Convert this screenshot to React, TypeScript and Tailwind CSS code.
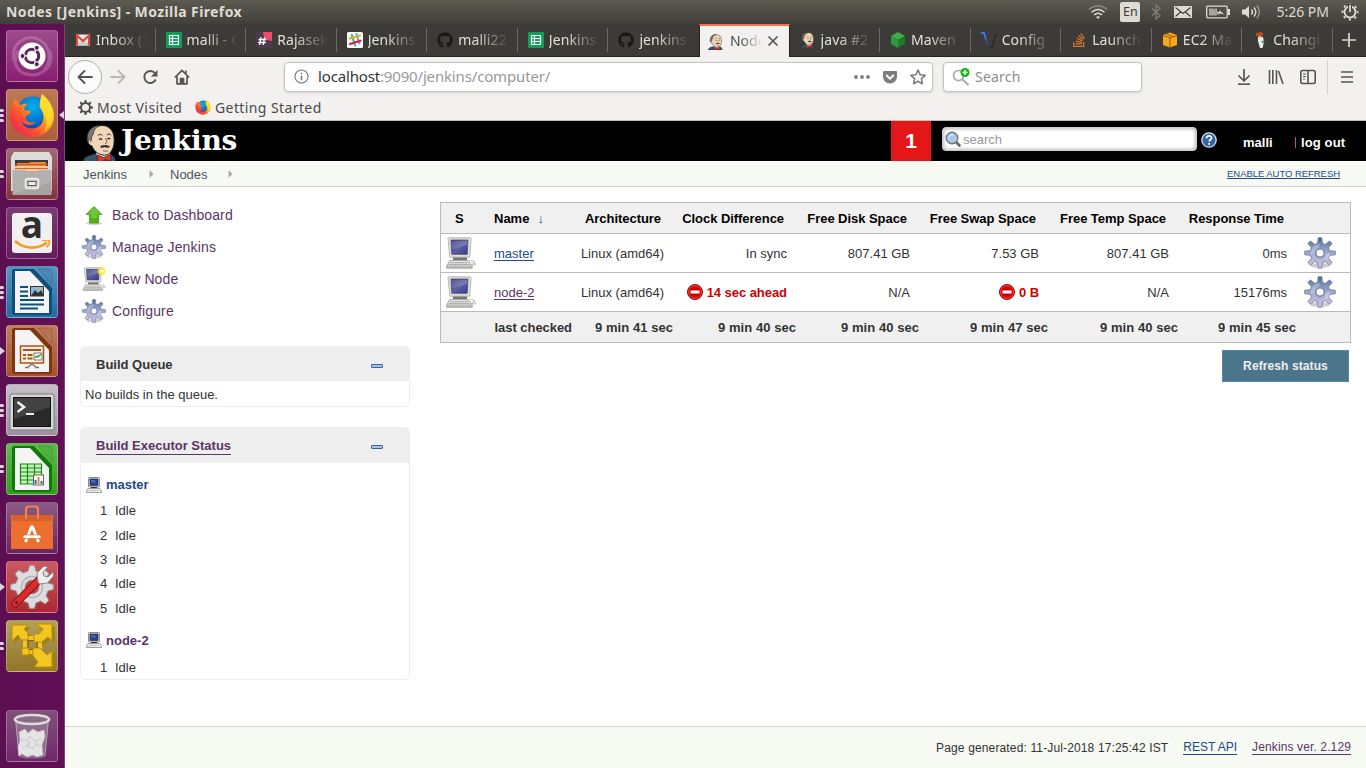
import React from 'react';
import { FaGithub, FaStackOverflow, FaGetPocket } from 'react-icons/fa';

const gearPath = (c: number, teeth: number, ro: number, ri: number, hole: number) => {
  const pts: string[] = [];
  const step = (Math.PI * 2) / teeth;
  for (let i = 0; i < teeth; i++) {
    const a = i * step - Math.PI / 2;
    const list: [number, number][] = [[-0.3, ri], [-0.15, ro], [0.15, ro], [0.3, ri]];
    for (const [k, r] of list) {
      pts.push(`${(c + r * Math.cos(a + k * step)).toFixed(2)} ${(c + r * Math.sin(a + k * step)).toFixed(2)}`);
    }
  }
  return `M${pts.join('L')}Z M${c - hole} ${c}a${hole} ${hole} 0 1 0 ${hole * 2} 0a${hole} ${hole} 0 1 0 ${-hole * 2} 0Z`;
};

const BlueGear = ({ className = '' }: { className?: string }) => (
  <svg viewBox="0 0 32 32" className={className}>
    <defs>
      <linearGradient id="bg" x1="0" y1="0" x2="0" y2="1">
        <stop offset="0" stopColor="#46689a" />
        <stop offset=".3" stopColor="#7f97bd" />
        <stop offset=".6" stopColor="#a9b2d2" />
        <stop offset="1" stopColor="#cfc3e6" />
      </linearGradient>
    </defs>
    <ellipse cx="16" cy="28.500" rx="10" ry="2.600" fill="#000" opacity=".2" />
    <path d={gearPath(16, 8, 15.4, 10, 4)} fill="url(#bg)" fillRule="evenodd" stroke="#6b7795" strokeWidth=".8" strokeLinejoin="round" />
    <path d="M7 18c-1-8 5-11 9-11-1 5-4 9-9 11z M21 17c3-1 4-1 5-1 0 4-2 7-5 8 1-2 1-4 0-7z" fill="#fff" opacity=".28" />
    <circle cx="16" cy="16" r="4.600" fill="none" stroke="#8790b4" strokeWidth="1.100" />
  </svg>
);

const Computer = ({ className = '', star = false }: { className?: string; star?: boolean }) => (
  <svg viewBox="0 0 32 32" className={className}>
    <defs>
      <linearGradient id="scr" x1="0" y1="0" x2="1" y2="1">
        <stop offset="0" stopColor="#34357c" />
        <stop offset=".5" stopColor="#5d5ea2" />
        <stop offset="1" stopColor="#3b3c86" />
      </linearGradient>
      <linearGradient id="base" x1="0" y1="0" x2="0" y2="1">
        <stop offset="0" stopColor="#efefec" />
        <stop offset="1" stopColor="#b4b4b0" />
      </linearGradient>
    </defs>
    <path d="M26 23.500c4 0 4.500 2.500 2.500 3.500s-2 1-2 1" fill="none" stroke="#b4b4b4" strokeWidth="1.100" />
    <rect x="8" y="20" width="14" height="3.500" fill="#777" />
    <path d="M3.800 .8h21.500l.8 1-1.400 18.400H4.900L3 1.800z" fill="#dedfd9" stroke="#a9aba6" strokeWidth=".8" />
    <path d="M6 3h17l-.8 14.300H6.800z" fill="url(#scr)" stroke="#2b2c5c" strokeWidth=".6" />
    <path d="M6.200 3.500h16.500l-.2 4.500C17 9 13 12 6.700 12z" fill="#fff" opacity=".17" />
    <path d="M4.500 23.500h19.500l3.300 6v1.700H1.500v-1.700z" fill="url(#base)" stroke="#959592" strokeWidth=".7" />
    <path d="M5 25.500h18.500M4 27.500h20.500" stroke="#a3a3a0" strokeWidth=".9" strokeDasharray="2 .5" />
    <ellipse cx="29" cy="27" rx="1.800" ry="1.200" fill="#eee" stroke="#999" strokeWidth=".5" />
    {star && <circle cx="26" cy="5.500" r="5.300" fill="#fbe80f" opacity=".75" />}
    {star && <circle cx="26" cy="5.500" r="2.300" fill="#fffbd0" />}
  </svg>
);

const SmallComputer = () => (
  <svg viewBox="0 0 16 16" className="h-4 w-4">
    <rect x="2.500" y=".5" width="11" height="9.500" rx=".8" fill="#d9dad5" stroke="#8a8a86" />
    <rect x="4" y="2" width="8" height="6.500" fill="#27408c" stroke="#17205c" strokeWidth=".6" />
    <path d="M5 3.500h4M5 5h5" stroke="#8fa3dc" strokeWidth=".5" />
    <rect x="5" y="10" width="6" height="1.500" fill="#333" />
    <path d="M2 11.500h12l1.500 2.500v1.500H.5V14z" fill="#ecece8" stroke="#8a8a86" strokeWidth=".8" />
    <path d="M3 13.500h10" stroke="#aaa" strokeWidth=".8" strokeDasharray="1.500 .5" />
  </svg>
);

const Butler = ({ className = '' }: { className?: string }) => (
  <svg viewBox="0 0 36 38" className={className}>
    <path d="M0 38c0-3 2-5.500 6-6.500l7-2 14 1c4 1 5.500 3 5.500 7.500z" fill="#33566b" stroke="#14222b" strokeWidth="1" />
    <path d="M13 29l4 8 11-6-3-4z" fill="#f3f3f3" />
    <path d="M5 13C6 5 12 1.500 19 1.500S30 6 31 13c.500 5 0 10-2 13-2 4-5 5.500-9 5-5-.6-9-4-11-9C5.500 21 3.500 16 5 13z" fill="#f0d6b7" stroke="#222" strokeWidth="1" />
    <path d="M4.500 18C2.500 9 8 .5 18 1.500c-5 1.500-7 4-7.500 7.500-.3 2-2 2.500-2 6l-1 4z" fill="#7b7874" stroke="#222" strokeWidth=".7" />
    <path d="M7 15.500c-3 0-2 6 1.500 6" fill="#f0d6b7" stroke="#222" strokeWidth=".9" />
    <path d="M15 11.500c1.500-1.500 3-1.500 4.500 0M24 11c1.500-1.500 3-1.200 4 .3" fill="none" stroke="#333" strokeWidth="1" />
    <path d="M16 15.500c1-.8 2.200-.8 3.200 0M24.500 15c1-.8 2-.7 2.800 0" fill="none" stroke="#222" strokeWidth="1.200" />
    <path d="M22.500 14c1.500 3 2.300 5-.5 5.600" fill="none" stroke="#7a4a30" strokeWidth=".9" />
    <path d="M17 22.500c3-2 7-2 10 0-2 2.300-4.500 1-5.500.5-1 .8-3 1.200-4.500-.5z" fill="#3a3532" />
    <path d="M20 26.500c2 1 3.500 1 5 0" fill="none" stroke="#555" strokeWidth=".9" />
    <path d="M14.500 31l6 2.500 7-3 .8 7-6.300-2-1 1.500-6.500 1z" fill="#d33833" stroke="#6d0f0d" strokeWidth=".8" />
  </svg>
);

const FirefoxLogo = ({ className = '' }: { className?: string }) => (
  <svg viewBox="0 0 46 46" className={className}>
    <defs>
      <linearGradient id="ffx" x1="1" y1="0" x2="0" y2="1">
        <stop offset="0" stopColor="#fff44f" />
        <stop offset=".35" stopColor="#ffb31c" />
        <stop offset=".65" stopColor="#ff4f2e" />
        <stop offset="1" stopColor="#d9176c" />
      </linearGradient>
      <radialGradient id="globe" cx=".5" cy=".3" r=".7">
        <stop offset="0" stopColor="#00b3ea" />
        <stop offset=".6" stopColor="#0672cf" />
        <stop offset="1" stopColor="#1d2f84" />
      </radialGradient>
    </defs>
    <circle cx="24" cy="22" r="17.500" fill="url(#globe)" />
    <path d="M6 7l5.500 6c2-1 5-1.500 7-1-3 2-3.500 4-3 6 2 1 5 0 6 1 .5 3-4 4-5 6 0 4 5 7 10 5-3 5-12 3-14-1 2 8 13 10 19 4 5-6 3-13-1-18 0-5 1-9 2.500-13C37 5 45 13 45 24 45 37 35 45 23 45S1 36 1 24C1 17 3 11 6 7z" fill="url(#ffx)" />
    <path d="M33 2c4 4 11 11 11 21-1 9-5 14-9 17 4-6 3-15-3-23-2-4 0-10 1-15z" fill="#ffe12b" opacity=".75" />
  </svg>
);

const Sheets = () => (
  <svg viewBox="0 0 16 16" className="h-4 w-4">
    <rect width="16" height="16" rx="1" fill="#0f9d58" />
    <path d="M3.500 3.500h9v9h-9zM3.500 6.500h9M3.500 9.500h9M6.500 3.500v9" fill="none" stroke="#fff" strokeWidth="1.200" />
  </svg>
);

const Gmail = () => (
  <svg viewBox="0 0 16 16" className="h-4 w-4">
    <rect x="1" y="2.500" width="14" height="11" fill="#e9e9e9" />
    <path d="M1 13.500L8 7l7 6.500z" fill="#cfcfcf" />
    <path d="M2 13.500v-10L8 9l6-5.500v10" fill="none" stroke="#dc4a3d" strokeWidth="2.200" />
  </svg>
);

const Rajase = () => (
  <svg viewBox="0 0 16 16" className="h-4 w-4">
    <rect width="16" height="16" rx="1.500" fill="#4d394b" />
    <path d="M7 0h9v9c-5 0-9-4-9-9z" fill="#ef4d63" />
    <path d="M5 5L3.600 13M8.600 5L7.200 13M2.500 7.500h8M2 10.500h8" stroke="#fff" strokeWidth="1.300" />
  </svg>
);

const Slack = () => (
  <svg viewBox="0 0 16 16" className="h-4 w-4">
    <rect width="16" height="16" rx="1.500" fill="#fff" />
    <g strokeWidth="2.200" strokeLinecap="round">
      <path d="M4.800 3l3.200 10.500" stroke="#3eb991" />
      <path d="M9.500 2l3 9.500" stroke="#4fb9c0" />
      <path d="M2.500 6.500l10.500-3" stroke="#e9a820" />
      <path d="M3 12l10.500-3.300" stroke="#e01550" />
    </g>
  </svg>
);

const GreenCube = () => (
  <svg viewBox="0 0 16 16" className="h-4 w-4">
    <path d="M8 0l7 4-7 4-7-4z" fill="#3fae49" />
    <path d="M1 4l7 4v8l-7-4z" fill="#2f9a3b" />
    <path d="M15 4L8 8v8l7-4z" fill="#1f7a2d" />
  </svg>
);

const VeeMark = () => (
  <svg viewBox="0 0 16 16" className="h-4 w-4">
    <path d="M0 1h3L5 7.500" fill="none" stroke="#3f73f0" strokeWidth="2" />
    <path d="M5 8l2.300 6" fill="none" stroke="#2a4ea8" strokeWidth="1.400" />
    <path d="M15.500 1l-4.500 14H8.500" fill="none" stroke="#2b2c2e" strokeWidth="1.800" />
  </svg>
);

const Ec2 = () => (
  <svg viewBox="0 0 16 16" className="h-4 w-4">
    <path d="M1 3l7-2.500L15 3v10l-7 2.500L1 13z" fill="#f5a81c" />
    <path d="M1 3.500l7 2.300 7-2.300M8 6v9.500M4.500 2l7 2.600" fill="none" stroke="#8a5300" strokeWidth=".9" />
  </svg>
);

const Figure = () => (
  <svg viewBox="0 0 16 16" className="h-4 w-4">
    <path d="M4 1l6-1 1.500 3-3.500 2.500-4-2z" fill="#b5501f" />
    <path d="M6 5h5l1 5-1.500 6H8L6 9z" fill="#ecebe5" />
    <path d="M6.500 7l2.500 2.500 4-1.500-2 3.500z" fill="#279a6c" />
    <circle cx="8" cy="5.500" r="1.500" fill="#f3cba2" />
  </svg>
);

const tabs = [
  { label: 'Inbox (3', icon: <Gmail /> },
  { label: 'malli - G', icon: <Sheets /> },
  { label: 'Rajasek', icon: <Rajase /> },
  { label: 'Jenkins', icon: <Slack /> },
  { label: 'malli22', icon: <FaGithub className="h-4 w-4 text-[#191919]" /> },
  { label: 'Jenkins', icon: <Sheets /> },
  { label: 'jenkins', icon: <FaGithub className="h-4 w-4 text-[#191919]" /> },
  { label: 'Node', icon: <Butler className="h-4 w-4" />, active: true },
  { label: 'java #2', icon: <Butler className="h-4 w-4" /> },
  { label: 'Maven', icon: <GreenCube /> },
  { label: 'Config', icon: <VeeMark /> },
  { label: 'Launch', icon: <FaStackOverflow className="h-4 w-4 text-[#d5782b]" /> },
  { label: 'EC2 Ma', icon: <Ec2 /> },
  { label: 'Changi', icon: <Figure /> },
];

const TopBar = () => (
  <header className="flex h-6 shrink-0 items-center justify-between bg-linear-to-b from-[#5c5a51] to-[#403f3a] pl-[6px] pr-[7px] text-[#dfdbd2]">
    <span className="-mt-[2px] whitespace-nowrap text-[14px] font-bold tracking-[0.400px]">Nodes [Jenkins] - Mozilla Firefox</span>
    <div className="flex items-center">
      <svg viewBox="0 0 20 16" className="mr-[12px] h-4 w-5" fill="none" stroke="#dfdbd2" strokeWidth="1.400">
        <path d="M.8 5.500C6 .8 14 .8 19.200 5.500" opacity=".4" />
        <path d="M3.500 8.200c4-3.400 9-3.400 13 0M6 11c2.500-2.200 5.500-2.200 8 0" />
        <path d="M8 13l2 2 2-2c-1.200-1-2.800-1-4 0z" fill="#dfdbd2" stroke="none" />
      </svg>
      <span className="mr-[11px] flex h-5 w-5 items-center justify-center rounded-[2px] bg-[#dfdbd2] text-[12.500px] text-[#3c3b37]">En</span>
      <svg viewBox="0 0 10 16" className="mr-[13px] h-4 w-[10px]" fill="none" stroke="#85827b" strokeWidth="1.200">
        <path d="M1 4.500l8 7L5 15V1l4 3.500-8 7" />
      </svg>
      <svg viewBox="0 0 18 12" className="mr-[14px] h-3 w-[18px]">
        <rect width="18" height="12" fill="#dfdbd2" />
        <path d="M1.500 1.500L9 7.500l7.500-6M1.500 10.500L6.500 6M16.500 10.500L11.500 6" fill="none" stroke="#3c3b37" strokeWidth="1.100" />
      </svg>
      <svg viewBox="0 0 24 14" className="mr-[11px] h-[14px] w-6">
        <rect x=".7" y="1.200" width="20.500" height="11.600" rx="1" fill="none" stroke="#dfdbd2" strokeWidth="1.300" />
        <rect x="22" y="4" width="2" height="6" fill="#dfdbd2" />
        <rect x="3" y="3.500" width="8" height="7" fill="#aaa69e" />
        <path d="M7 3l6 4.500V5l6.500 5-6-1.500V11z" fill="#f5f2ea" stroke="#44423d" strokeWidth=".5" />
      </svg>
      <svg viewBox="0 0 20 16" className="mr-[15px] h-4 w-5" fill="none" stroke="#dfdbd2" strokeWidth="1.400">
        <path d="M1 5.500h3l4-3.500v12l-4-3.500H1z" fill="#dfdbd2" stroke="none" />
        <path d="M10.500 5.500c1.200 1.500 1.200 3.500 0 5M13 3.500c2.200 2.700 2.200 6.300 0 9" />
        <path d="M15.800 1.500c3.200 4 3.200 9 0 13" opacity=".5" />
      </svg>
      <span className="-mt-[2px] mr-[12px] whitespace-nowrap text-[14px]">5:26 PM</span>
      <svg viewBox="0 0 18 18" className="h-[18px] w-[18px]" fill="none" stroke="#dfdbd2">
        <circle cx="9" cy="9" r="5.500" strokeWidth="1.800" />
        <circle cx="9" cy="9" r="7.500" strokeWidth="2" strokeDasharray="2.200 3.690" strokeDashoffset="1" />
        <path d="M9 1v8" stroke="#45433e" strokeWidth="4" />
        <path d="M9 2v7" strokeWidth="1.800" />
      </svg>
    </div>
  </header>
);

const Tile = ({ bg, pips, children, arrow }: { bg: string; pips?: number; children: React.ReactNode; arrow?: boolean }) => (
  <div className="flex h-[52px] w-full items-center">
    <div className="flex w-[6px] flex-col gap-[2px]">
      {pips === 1 && (
        <svg viewBox="0 0 5 8" className="h-2 w-[5px]"><path d="M0 0l5 4-5 4z" fill="#dcd3da" /></svg>
      )}
      {pips !== 1 && Array.from({ length: pips || 0 }).map((_, i) => <i key={i} className="h-[3px] w-[4px] rounded-r-sm bg-[#dcd3da]" />)}
    </div>
    <div className={`flex h-[52px] w-[52px] items-center justify-center rounded-[4px] border border-white/25 bg-linear-to-b ${bg}`}>{children}</div>
    {arrow && <svg viewBox="0 0 5 8" className="ml-px h-2 w-[5px]"><path d="M5 0L0 4l5 4z" fill="#dcd3da" /></svg>}
  </div>
);

const Doc = ({ edge, dark, children }: { edge: string; dark: string; children: React.ReactNode }) => (
  <svg viewBox="0 0 50 50" className="h-[50px] w-[50px]">
    <path d="M7 2h20l18 19v24c0 2-1 3-3 3H8c-2 0-3-1-3-3V4c0-1 1-2 2-2z" fill={dark} />
    <path d="M31 2h11c2 0 3 1 3 3v12z" fill={edge} stroke={dark} strokeOpacity=".3" />
    <path d="M8 4h15l19 20v22H8z" fill="#f4f4f4" />
    {children}
  </svg>
);

const Launcher = () => (
  <aside className="flex w-[65px] shrink-0 flex-col gap-[7px] border-r border-[#7d4775] bg-linear-to-r from-[#5b0f51] to-[#621056] pt-[6px]">
    <Tile bg="from-[#9c4b8c] to-[#8c1c74]">
      <svg viewBox="0 0 50 50" className="h-[50px] w-[50px]">
        <path d="M7 30C3 12 20 2 33 9 46 17 43 33 37 39M43 20C48 38 31 48 16 42 8 38 6 29 11 20" fill="none" stroke="#fff" opacity=".2" strokeWidth="3" />
        <circle cx="25" cy="25" r="13.500" fill="#fff" />
        <circle cx="25" cy="25" r="6.700" fill="none" stroke="#5e2750" strokeWidth="3" strokeDasharray="12.500 1.530" strokeDashoffset="6.200" />
        {[180, 60, 300].map((d) => (
          <circle key={d} cx={25 + 9.5 * Math.cos((d * Math.PI) / 180)} cy={25 + 9.5 * Math.sin((d * Math.PI) / 180)} r="2.500" fill="#5e2750" stroke="#fff" strokeWidth="1" />
        ))}
      </svg>
    </Tile>
    <Tile bg="from-[#bd7855] to-[#ad5f3d]" pips={3} arrow><FirefoxLogo className="h-[46px] w-[46px]" /></Tile>
    <Tile bg="from-[#a06a74] to-[#85303f]" pips={2}>
      <svg viewBox="0 0 50 50" className="h-[50px] w-[50px]">
        <path d="M7 3h35l3 5v34H4V8z" fill="#dddcda" />
        <path d="M8 11h33v17H8z" fill="#3f3a38" />
        <path d="M10 14h12l2-1h15v10H10z" fill="#e98a3c" /><path d="M8 17h33v5H8z" fill="#f3c79b" /><path d="M8 15.500h33" stroke="#c4571e" /><path d="M8 19.500h33" stroke="#d4622a" />
        <path d="M5.500 21H18l2 1.500h10l2-1.500h12.500v25h-39z" fill="#a5a4a2" /><path d="M5.500 21h39v12L5.500 45z" fill="#fff" opacity=".15" />
        <rect x="18.500" y="29.500" width="13" height="10" rx="2" fill="#ccc" stroke="#eee" strokeWidth="1.500" />
        <rect x="21" y="32.500" width="8" height="4" fill="#eee" stroke="#555" />
      </svg>
    </Tile>
    <Tile bg="from-[#793c72] to-[#651b5c]">
      <div className="flex h-[40px] w-[40px] flex-col items-center rounded-[3px] bg-[#f0f0f0]">
        <span className="h-[27px] font-['Open_Sans',sans-serif] text-[37px] font-bold leading-[21px] text-[#2e2e2e]">a</span>
        <svg viewBox="0 0 40 13" className="h-[13px] w-10" fill="none" stroke="#f79b1d">
          <path d="M3 1c9 8 22 9 32 1.500" strokeWidth="2.600" />
          <path d="M30.500 .8c3-1 6-.8 6.700 0 .6 1.500-.5 4.500-2.500 6.500" strokeWidth="1.700" />
        </svg>
      </div>
    </Tile>
    <Tile bg="from-[#5a93bd] to-[#256c9f]" pips={3}>
      <Doc edge="#4a88b4" dark="#114e7d">
        <path d="M13 20h8M13 24.500h8M13 29h8M13 33h24M13 37.500h24M13 41.500h18" stroke="#0a5080" strokeWidth="2" />
        <rect x="23.500" y="19.500" width="13" height="9.500" fill="#88b9dc" stroke="#333" /><path d="M24 29l4-6 3 3 3-3 3 6z" fill="#333" /><circle cx="33" cy="22" r="1.200" fill="#e5b83f" />
      </Doc>
    </Tile>
    <Tile bg="from-[#bd8060] to-[#a5502a]" pips={1}>
      <Doc edge="#b87350" dark="#80350f">
        <rect x="13.500" y="20" width="23" height="17" fill="#fff2df" stroke="#b04c16" strokeWidth="1.500" />
        <path d="M16 24h18M16 29h3M16 32.500h3M20.500 29h5M20.500 32.500h5" stroke="#ad4d1e" strokeWidth="2" />
        <path d="M27 27h8v7h-8z" fill="#fff" stroke="#777" /><path d="M28 32l2-2 1 1 3-3" stroke="#2c9b3a" fill="none" strokeWidth="1.400" />
        <path d="M21 41l4-3 4 3M18 41.500h4M28 41.500h4" stroke="#777" fill="none" strokeWidth="1.500" />
      </Doc>
    </Tile>
    <Tile bg="from-[#c5bfc8] to-[#9c93a1]" pips={3}>
      <svg viewBox="0 0 50 50" className="h-[50px] w-[50px]">
        <rect x="3" y="9" width="44" height="36" rx="2" fill="#d7d7d3" stroke="#7e7b80" />
        <rect x="6.500" y="12.500" width="37" height="29" fill="#292929" stroke="#111" />
        <path d="M7 13h36v9L7 34z" fill="#fff" opacity=".12" />
        <path d="M10.500 17l6.500 5-6.500 5" fill="none" stroke="#eee" strokeWidth="2.500" /><path d="M19 29h8" stroke="#eee" strokeWidth="2" />
      </svg>
    </Tile>
    <Tile bg="from-[#62b952] to-[#319d1e]" pips={2}>
      <Doc edge="#50b33e" dark="#107a08">
        <path d="M13.500 20h21v20h-21zM13.500 24h21M13.500 28h21M13.500 32h21M13.500 36h21M20.500 20v20M27.500 20v20" fill="#c9f1be" stroke="#178b10" strokeWidth="1.200" />
        <rect x="26.500" y="31" width="10" height="10" fill="#fff" stroke="#666" /><path d="M28.500 40v-4M34.500 40v-3" stroke="#286db4" strokeWidth="2" /><path d="M31.500 40v-7" stroke="#e3872a" strokeWidth="2" />
      </Doc>
    </Tile>
    <Tile bg="from-[#8b5a83] to-[#6b2461]">
      <svg viewBox="0 0 50 50" className="h-[50px] w-[50px]">
        <path d="M4 12h42v34H4z" fill="#ed6f2f" /><path d="M6 12h38l2 6H4z" fill="#d95f29" />
        <path d="M19 16V6.500c0-2 1-3 3-3h6c2 0 3 1 3 3V16" fill="none" stroke="#ec8350" strokeWidth="2.200" />
        <path d="M18.500 39l6-15h1l6 15" fill="none" stroke="#fff" strokeWidth="3" /><rect x="16" y="32" width="18" height="3.500" rx="1.500" fill="#fff" stroke="#ed6f2f" strokeWidth=".7" />
      </svg>
    </Tile>
    <Tile bg="from-[#cc5960] to-[#ab2733]" pips={1}>
      <svg viewBox="0 0 50 50" className="h-[50px] w-[50px]">
        <path d={gearPath(25, 8, 21.5, 16.5, 7)} fill="#dedddd" stroke="#999" fillRule="evenodd" strokeLinejoin="round" />
        <circle cx="25" cy="25" r="10.500" fill="none" stroke="#b5b5b5" strokeWidth="1.500" />
        <path d="M8 42L33 17" stroke="#941518" strokeWidth="8" strokeLinecap="round" /><path d="M8 42L33 17" stroke="#d82c2c" strokeWidth="5.500" strokeLinecap="round" />
        <path d="M31 20l-1-9 7-7 4 1-5 5 1 4 4 1 5-5 .5 4-6 7-8 1z" fill="#eee" stroke="#888" /><circle cx="9.500" cy="40.500" r="1.500" fill="#7c1011" />
      </svg>
    </Tile>
    <Tile bg="from-[#b3a15a] to-[#927525]" pips={2}>
      <svg viewBox="0 0 50 50" className="h-[50px] w-[50px]">
        <g strokeLinejoin="round">
          <g fill="#a67f12" transform="translate(1.500 1.500)">
            <path d="M6 5h16l-4 4 4 4v7h-7l-3-5-6 6z" /><path d="M29 4h17v17l-4-4-6 5h-8v-8h5l4-5z" /><path d="M46 47H28l4-5-5-6v-8h7l7 7 5-4z" /><path d="M16 27h7v8h-7z" />
          </g>
          <rect x="18" y="17" width="15" height="14" fill="none" stroke="#f2c820" strokeWidth="4" />
          <rect x="21" y="19.500" width="9" height="9" fill="none" stroke="#7b6118" />
          <g fill="#f2c820" stroke="#b48a14">
            <path d="M5 4h16l-4 4 4 4v7h-7l-3-5-6 6z" /><path d="M28 3h17v17l-4-4-6 5h-8v-8h5l4-5z" /><path d="M45 46H27l4-5-5-6v-8h7l7 7 5-4z" /><path d="M15 27h7v7h-7z" />
          </g>
        </g>
      </svg>
    </Tile>
    <div className="mt-[31px]">
      <Tile bg="from-[#815078] to-[#71266a]">
        <svg viewBox="0 0 50 50" className="h-[50px] w-[50px]">
          <path d="M8 10h34l-4 36c-6 2-20 2-26 0z" fill="#9b7c98" opacity=".7" />
          <g fill="#e4e4e4" stroke="#bdbdbd" strokeWidth=".7">
            <path d="M12 21l6-3 3 4 5-4 5 3 6-2 1 7-3 8 1 10-6 2-4-2-6 2-5-3-3 2-1-9 2-6z" />
            <path d="M14 28l6 2 3-5 4 5 7-2M15 38l5-4 5 4 4-5 6 3M22 30l-1 7M29 29l1 5" fill="none" />
          </g>
          <ellipse cx="25" cy="8.500" rx="17" ry="4.500" fill="#8c6b8a" stroke="#dcdcdc" strokeWidth="2.600" />
          <path d="M9 12l3 33M41 12l-3 33" stroke="#e1dce0" opacity=".5" />
        </svg>
      </Tile>
    </div>
  </aside>
);

const TabStrip = () => (
  <div className="flex h-[33px] shrink-0 border-b border-[#252421] bg-[#3c3b37]">
    {tabs.map((t, i) =>
      t.active ? (
        <div key={i} className="-mb-px flex h-[33px] w-[90.570px] items-center border-x border-[#252421] border-t-2 border-t-[#f07746] bg-[#f2f1f0] bg-clip-padding pl-[8px]">
          {t.icon}
          <span className="-mt-[2px] ml-[6px] w-[37px] whitespace-nowrap text-[14px] text-[#4a4a4a] [mask-image:linear-gradient(to_right,#000_10px,transparent_32px)]">{t.label}</span>
          <svg viewBox="0 0 12 12" className="-mt-[2px] h-3 w-3 shrink-0" stroke="#555" strokeWidth="1.600"><path d="M1.500 1.500l9 9M10.500 1.500l-9 9" /></svg>
        </div>
      ) : (
        <div key={i} className="flex h-8 w-[90.570px] items-center pl-[10px]">
          {t.icon}
          <span className="-mt-px ml-[5px] w-[58px] shrink-0 whitespace-nowrap text-[14px] tracking-[0.100px] text-[#e3e0da] [mask-image:linear-gradient(to_right,#000_17px,transparent_51px)]">{t.label}</span>
          <i className={`ml-auto h-6 w-px ${i === 6 ? '' : 'bg-[#6c6b67]'}`} />
        </div>
      )
    )}
    <div className="flex flex-1 items-center justify-center"><svg viewBox="0 0 14 14" className="h-[14px] w-[14px]" stroke="#d9d6cf" strokeWidth="1.700"><path d="M7 0v14M0 7h14" /></svg></div>
  </div>
);

const Toolbar = () => (
  <div className="flex h-[39px] shrink-0 items-center bg-[#f2f1f0] pl-[3px] text-[#555]">
    <span className="flex h-[34px] w-[34px] items-center justify-center rounded-full border border-[#b0afad] bg-[#fbfbfb]">
      <svg viewBox="0 0 16 16" className="h-4 w-4" fill="none" stroke="#555" strokeWidth="1.900" strokeLinecap="round" strokeLinejoin="round"><path d="M15 8H1.500M7.500 2l-6 6 6 6" /></svg>
    </span>
    <svg viewBox="0 0 16 16" className="ml-[8px] h-4 w-4" fill="none" stroke="#b9b8b6" strokeWidth="1.900" strokeLinecap="round" strokeLinejoin="round"><path d="M1 8h13.500M8.500 2l6 6-6 6" /></svg>
    <svg viewBox="0 0 16 16" className="ml-[16px] h-4 w-4" fill="none" stroke="#555" strokeWidth="1.900"><path d="M13 4.200A6 6 0 1 0 13.800 10.500" /><path d="M15.500 1v6.500H9z" fill="#555" stroke="none" /></svg>
    <svg viewBox="0 0 16 16" className="ml-[16px] h-4 w-4" fill="none" stroke="#555" strokeWidth="1.700" strokeLinejoin="round"><path d="M.8 8.500L8 1.300l7.200 7.200M3 7.500v7.300h10V7.500" /><path d="M6.500 14.500V9.700h3v4.800" fill="#555" /><path d="M12 1.500v3" /></svg>
    <div className="ml-[94px] flex h-[30px] w-[649px] items-center rounded-[4px] border border-[#c4c3c1] bg-white pl-[9px] pr-[6px] shadow-sm">
      <svg viewBox="0 0 16 16" className="h-[15px] w-[15px]" fill="none" stroke="#777"><circle cx="8" cy="8" r="7" strokeWidth="1.200" /><path d="M8 7v5M8 4v1.600" strokeWidth="1.600" /></svg>
      <span className="ml-[9px] flex-1 text-[15px] tracking-[-0.160px] text-[#999]"><b className="font-normal text-[#333]">localhost</b>:9090/jenkins/computer/</span>
      <svg viewBox="0 0 16 4" className="h-1 w-4" fill="#7d7d7d"><circle cx="2" cy="2" r="1.900" /><circle cx="8" cy="2" r="1.900" /><circle cx="14" cy="2" r="1.900" /></svg>
      <FaGetPocket className="ml-[12px] h-4 w-4 text-[#7d7d7d]" />
      <svg viewBox="0 0 16 16" className="ml-[12px] h-4 w-4" fill="none" stroke="#7d7d7d" strokeWidth="1.600" strokeLinejoin="round"><path d="M8 1l2.100 4.700 5.100.6-3.800 3.400 1 5L8 12.300l-4.400 2.400 1-5L.8 6.300l5.100-.6z" /></svg>
    </div>
    <div className="ml-[10px] flex h-[30px] w-[199px] items-center rounded-[4px] border border-[#c4c3c1] bg-white pl-[8px] shadow-sm">
      <svg viewBox="0 0 18 18" className="h-[18px] w-[18px]" fill="none"><circle cx="6.500" cy="7.500" r="5" stroke="#aaa" strokeWidth="1.700" /><path d="M10.500 11.500l6 5.500" stroke="#aaa" strokeWidth="2" /><circle cx="13" cy="4.500" r="4.500" fill="#12b70d" /><path d="M13 2v5M10.500 4.500h5" stroke="#fff" strokeWidth="1.400" /></svg>
      <span className="ml-[5px] text-[14px] tracking-[0.200px] text-[#8c8c8c]">Search</span>
    </div>
    <svg viewBox="0 0 16 16" className="ml-[94px] h-4 w-4" fill="none" stroke="#555" strokeWidth="1.700"><path d="M8 0v11M2.500 6.500L8 12l5.500-5.500" strokeLinejoin="round" /><path d="M2 15.200h12" /></svg>
    <svg viewBox="0 0 16 16" className="ml-[16px] h-4 w-4" fill="none" stroke="#555" strokeWidth="1.600"><path d="M1.500 1v14M4.800 1v14M8.500 1v14M10.500 2L15 15" /></svg>
    <svg viewBox="0 0 16 16" className="ml-[16px] h-4 w-4" fill="none" stroke="#555" strokeWidth="1.600"><rect x=".8" y="1.500" width="14.400" height="13" rx="2" /><path d="M8 1.500v13" /><path d="M3 5h3M3 7.500h3M3 10h2" strokeWidth="1" /></svg>
    <i className="ml-[11px] h-[34px] w-px bg-[#d3d2d0]" />
    <svg viewBox="0 0 14 14" className="ml-[12px] h-[14px] w-[14px]" stroke="#555" strokeWidth="1.700"><path d="M1 2h12M1 7h12M1 12h12" /></svg>
  </div>
);

const Minus = () => <i className="mt-px h-1 w-3 rounded-[1px] border border-[#3465a4] bg-[#a8c2e6]" />;

const NoEntry = () => (
  <svg viewBox="0 0 16 16" className="-mt-[2px] mr-[4px] h-4 w-4"><circle cx="8" cy="8" r="7.500" fill="#d40000" stroke="#a00" /><circle cx="8" cy="8" r="6.500" fill="none" stroke="#ee6a6a" strokeWidth=".7" /><rect x="3.500" y="6.500" width="9" height="3" fill="#fff" /></svg>
);

const rowGrid = 'grid grid-cols-[45px_88px_101px_123px_123px_129px_130px_118px_52px] items-center';
const headers = ['Architecture', 'Clock Difference', 'Free Disk Space', 'Free Swap Space', 'Free Temp Space', 'Response Time'];
const checks = ['9 min 41 sec', '9 min 40 sec', '9 min 40 sec', '9 min 47 sec', '9 min 40 sec', '9 min 45 sec'];
const nodes = [
  { name: 'master', color: 'border-[#204a87] text-[#204a87]', cells: ['Linux (amd64)', 'In sync', '807.41 GB', '7.53 GB', '807.41 GB', '0ms'] },
  { name: 'node-2', color: 'border-[#5c3566] text-[#5c3566]', cells: ['Linux (amd64)', '!14 sec ahead', 'N/A', '!0 B', 'N/A', '15176ms'] },
];

const NodeTable = () => (
  <div className="w-[911px] border border-[#bbb] text-[13px] leading-4">
    <div className={`${rowGrid} h-[30px] bg-[#f0f0f0] pt-[2px] font-bold text-black`}>
      <span className="pl-[14px]">S</span>
      <span className="flex pl-[8px]">Name <b className="ml-[8px] font-normal text-[#204a87]">↓</b></span>
      {headers.map((h) => <span key={h} className="whitespace-nowrap pr-[14px] text-right tracking-[-0.050px]">{h}</span>)}
    </div>
    {nodes.map((n) => (
      <div key={n.name} className={`${rowGrid} h-[39px] border-t border-[#bbb]`}>
        <Computer className="ml-[4px] h-8 w-8" />
        <span className="pl-[8px] pt-[2px]"><a className={`inline-block h-[15px] border-b ${n.color}`}>{n.name}</a></span>
        {n.cells.map((c, i) => c[0] === '!' ? (
          <span key={i} className="flex items-center justify-end whitespace-nowrap pr-[11px] pt-[2px] font-bold tracking-[-0.050px] text-[#cc0000]"><NoEntry />{c.slice(1)}</span>
        ) : (
          <span key={i} className="whitespace-nowrap pr-[11px] pt-[2px] text-right">{c}</span>
        ))}
        <BlueGear className="ml-[6px] h-8 w-8" />
      </div>
    ))}
    <div className={`${rowGrid} h-[31px] border-t border-[#bbb] bg-[#f0f0f0] pt-[2px] font-bold`}>
      <span />
      <span className="pr-[2px] text-right tracking-[-0.050px]">last checked</span>
      {checks.map((c, i) => <span key={i} className="pr-[2px] text-right tracking-[0.050px]">{c}</span>)}
    </div>
  </div>
);

const Executor = ({ n }: { n: number }) => (
  <div className="flex h-[24.300px] items-center pl-[19px]"><span className="w-[15px]">{n}</span><span>Idle</span></div>
);

const SidePanel = () => (
  <div className="flex w-[330px] shrink-0 flex-col">
    <nav className="flex flex-col text-[14px] text-[#5c3566]">
      <a className="flex h-8 items-center gap-[6px] pl-[2px]">
        <svg viewBox="0 0 24 24" className="h-6 w-6">
          <ellipse cx="12" cy="20.500" rx="8" ry="1.500" fill="#000" opacity=".2" />
          <path d="M12 3.500l8 8h-3.500v8.500h-9v-8.500H4z" fill="#52b312" stroke="#4b9a1c" strokeWidth=".8" /><path d="M12 4.500l6 6.500h-3v4H9v-4H6z" fill="#fff" opacity=".2" />
        </svg>
        <span className="tracking-[0.100px]">Back to Dashboard</span>
      </a>
      <a className="flex h-8 items-center gap-[6px] pl-[2px] tracking-[0.150px]"><BlueGear className="h-6 w-6" />Manage Jenkins</a>
      <a className="flex h-8 items-center gap-[6px] pl-[2px] tracking-[0.120px]"><Computer star className="h-6 w-6" />New Node</a>
      <a className="flex h-8 items-center gap-[6px] pl-[2px] tracking-[0.120px]"><BlueGear className="h-6 w-6" />Configure</a>
    </nav>
    <section className="mt-[19px] h-[61px] overflow-hidden rounded-[5px] border border-[#eee]">
      <div className="flex h-[34px] items-center justify-between bg-[#eee] pl-[15px] pr-[26px] pt-[2px] text-[13px] font-bold">Build Queue <Minus /></div>
      <p className="pl-[4px] text-[13px] leading-[27px]">No builds in the queue.</p>
    </section>
    <section className="mt-[20px] h-[253px] overflow-hidden rounded-[5px] border border-[#eee] text-[13px]">
      <div className="flex h-[35px] items-center justify-between bg-[#eee] pl-[15px] pr-[26px] pt-[2px] font-bold text-[#5c3566]">
        <a className="h-[17px] border-b border-[#5c3566] leading-4">Build Executor Status</a><Minus />
      </div>
      <div className="mt-[9px] flex h-[26px] items-center gap-[4px] pl-[5px] font-bold text-[#204a87]"><SmallComputer />master</div>
      <div className="pt-px">{[1, 2, 3, 4, 5].map((n) => <Executor key={n} n={n} />)}</div>
      <div className="mt-[8px] flex h-[24px] items-center gap-[4px] pl-[5px] font-bold text-[#5c3566]"><SmallComputer />node-2</div>
      <div className="mt-[3px]"><Executor n={1} /></div>
    </section>
  </div>
);

const Chevron = () => <svg viewBox="0 0 5 8" className="h-2 w-[5px]"><path d="M.5 0l4 4-4 4z" fill="#aaa" /></svg>;

const JenkinsPage = () => (
  <main className="flex flex-1 flex-col bg-white font-['Liberation_Sans',sans-serif] text-[#333]">
    <div className="flex h-[40px] shrink-0 items-center bg-black pl-[18px]">
      <Butler className="mt-[4px] h-[38px] w-[36px]" />
      <span className="relative ml-[2px] w-[118px] font-['DejaVu_Serif',serif] text-[28px] font-bold leading-9 tracking-[-0.200px] text-white">Jenkins</span>
      <span className="ml-[652px] flex h-10 w-10 items-center justify-center bg-[#e31717] text-[21px] font-bold text-white">1</span>
      <div className="-mt-[4px] ml-[11px] flex h-6 w-[255px] items-center rounded-[4px] border border-[#ccc] bg-white pl-[2px] shadow-[inset_0_0_4px_#999]">
        <svg viewBox="0 0 16 16" className="-mt-px h-4 w-4"><path d="M10.500 10.500l4 4" stroke="#666" strokeWidth="2.600" strokeLinecap="round" /><circle cx="7" cy="7" r="5.800" fill="#a9c8ec" stroke="#777" strokeWidth="1.400" /><path d="M4 6.500a3 3 0 0 1 4-2.500" stroke="#fff" fill="none" /></svg>
        <span className="ml-[2px] mt-px text-[13px] text-[#999]">search</span>
      </div>
      <svg viewBox="0 0 16 16" className="-mt-[2px] ml-[4px] h-4 w-4"><circle cx="8" cy="8" r="7.200" fill="#3465a4" stroke="#d3e0f0" strokeWidth="1.300" /><path d="M5.500 6.200C5.500 3 10.600 3.200 10.500 6c0 1.700-2.400 1.800-2.400 3.600M8.100 11v1.800" fill="none" stroke="#fff" strokeWidth="1.700" /></svg>
      <span className="ml-[26px] mt-[4px] w-[52px] text-[13px] font-bold text-white">malli</span>
      <span className="mt-[4px] flex gap-[5px] whitespace-nowrap text-[13px] font-bold tracking-[0.120px] text-white"><i className="mt-[4px] h-[11px] w-px bg-[#c0603c]" />log out</span>
    </div>
    <div className="flex h-[26px] shrink-0 items-center border-b border-[#d3d7cf] bg-[#f6faf2] pl-[18px] pr-[26px] text-[13px] text-[#4d545d]">
      <span className="w-[66px] pt-[2px]">Jenkins</span><Chevron />
      <span className="ml-[16px] w-[58px] pt-[2px]">Nodes</span><Chevron />
      <a className="ml-auto h-[11px] border-b border-[#204a87] text-[9.500px] leading-[11px] tracking-[-0.050px] text-[#204a87]">ENABLE AUTO REFRESH</a>
    </div>
    <div className="flex flex-1 pl-[15px] pt-[12px]">
      <SidePanel />
      <div className="ml-[30px] flex flex-col items-end pt-[3px]">
        <NodeTable />
        <button className="mr-[2px] mt-[7px] h-8 w-[127px] border border-[#5788a1] bg-[#4b758b] text-[12px] font-bold tracking-[0.100px] text-[#eee]">Refresh status</button>
      </div>
    </div>
    <footer className="flex h-[42px] shrink-0 items-center justify-end gap-[15px] border-t border-[#d3d7cf] bg-[#f6faf2] pr-[15px] text-[12px] leading-[14px]">
      <span className="tracking-[0.140px]">Page generated: 11-Jul-2018 17:25:42 IST</span>
      <a className="border-b border-[#204a87] text-[#204a87]">REST API</a>
      <a className="border-b border-[#5c3566] tracking-[0.120px] text-[#5c3566]">Jenkins ver. 2.129</a>
    </footer>
  </main>
);

export default function App() {
  return (
    <div className="flex h-[768px] w-[1366px] flex-col overflow-hidden font-['Noto_Sans',sans-serif]">
      <TopBar />
      <div className="flex min-h-0 flex-1">
        <Launcher />
        <div className="flex w-[1301px] flex-col">
          <TabStrip />
          <Toolbar />
          <div className="flex h-[25px] shrink-0 items-center border-b border-[#bebdbb] bg-[#f2f1f0] pb-[2px] pl-[13px] text-[14px] tracking-[0.400px] text-[#4a4a4a]">
            <svg viewBox="0 0 32 32" className="h-[15px] w-[15px]"><path d={gearPath(16, 8, 16, 11.5, 7.5)} fill="#4f4f4f" fillRule="evenodd" /></svg>
            <span className="ml-[4px] w-[98px] whitespace-nowrap">Most Visited</span>
            <FirefoxLogo className="h-4 w-4" />
            <span className="ml-[4px] whitespace-nowrap">Getting Started</span>
          </div>
          <JenkinsPage />
        </div>
      </div>
    </div>
  );
}
